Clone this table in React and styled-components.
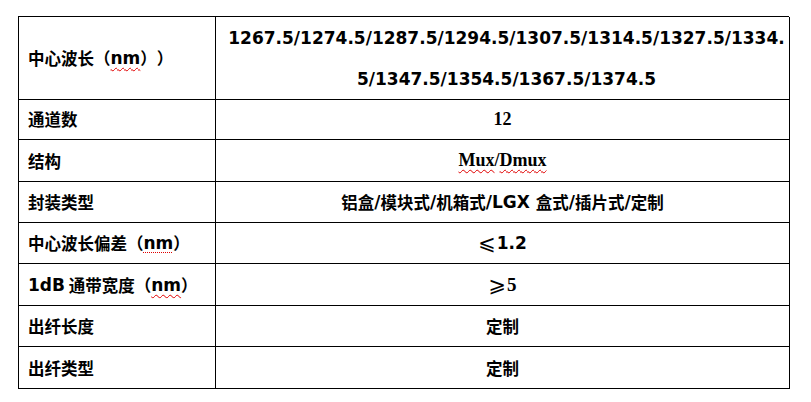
import React from "react";
import styled, { createGlobalStyle } from "styled-components";

const Global = createGlobalStyle`
  html, body { margin: 0; padding: 0; background: #fff; }
  body { font-family: "Noto Sans CJK SC", sans-serif; color: #000; }
`;

const Page = styled.div`
  padding: 16px 0 0 18px;
`;

const Table = styled.div`
  width: 771px;
  border-top: 1px solid #000;
  border-left: 1px solid #000;
  box-sizing: border-box;
`;

const Row = styled.div`
  display: grid;
  grid-template-columns: 197px 574px;
  height: ${(p) => p.$h}px;
`;

const Cell = styled.div`
  box-sizing: border-box;
  border-right: 1px solid #000;
  border-bottom: 1px solid #000;
  display: flex;
  align-items: center;
  font-family: "Noto Sans CJK SC", sans-serif;
  font-weight: 700;
  font-size: 16.5px;
  white-space: nowrap;
  text-spacing-trim: space-all;
`;

const Label = styled(Cell)`
  padding-left: 9px;
  justify-content: flex-start;
`;

const Value = styled(Cell)`
  justify-content: center;
  text-align: center;
  padding-left: ${(p) => p.$shift || 0}px;
`;

const Lines = styled.div`
  line-height: 40px;
`;

const Lat = styled.span`
  font-family: "DejaVu Sans", sans-serif;
  font-weight: 700;
  font-size: ${(p) => p.$size || 17}px;
`;

const Ser = styled.span`
  font-family: "Liberation Serif", serif;
  font-weight: 700;
  font-size: ${(p) => p.$size || 18}px;
`;

const Sym = styled.span`
  font-family: "DejaVu Sans", sans-serif;
  font-weight: 400;
  font-size: 21px;
  margin-right: 1px;
`;

const Spell = styled.span`
  text-decoration-line: underline;
  text-decoration-style: ${(p) => (p.$dotted ? "dotted" : "wavy")};
  text-decoration-color: #e00000;
  text-decoration-thickness: 1px;
  text-underline-offset: 3px;
`;

export default function App() {
  return (
    <>
      <Global />
      <Page>
        <Table>
          <Row $h={82}>
            <Label>
              中心波长（<Lat><Spell>nm</Spell></Lat>））
            </Label>
            <Value $shift={8}>
              <Lines>
                <Lat>1267.5/1274.5/1287.5/1294.5/1307.5/1314.5/1327.5/1334.</Lat>
                <br />
                <Lat>5/1347.5/1354.5/1367.5/1374.5</Lat>
              </Lines>
            </Value>
          </Row>
          <Row $h={41}>
            <Label>通道数</Label>
            <Value>
              <Ser>12</Ser>
            </Value>
          </Row>
          <Row $h={42}>
            <Label>结构</Label>
            <Value>
              <Ser>
                <Spell>Mux</Spell>/<Spell>Dmux</Spell>
              </Ser>
            </Value>
          </Row>
          <Row $h={41}>
            <Label>封装类型</Label>
            <Value>
              铝盒<Lat>/</Lat>模块式<Lat>/</Lat>机箱式<Lat>/LGX&nbsp;</Lat>盒式<Lat>/</Lat>插片式<Lat>/</Lat>定制
            </Value>
          </Row>
          <Row $h={41}>
            <Label>
              中心波长偏差（<Lat><Spell $dotted>nm</Spell></Lat>）
            </Label>
            <Value>
              <Sym>⩽</Sym>
              <Lat>1.2</Lat>
            </Value>
          </Row>
          <Row $h={42}>
            <Label>
              <Lat>1dB</Lat>&nbsp;通带宽度（<Lat><Spell>nm</Spell></Lat>）
            </Label>
            <Value>
              <Sym>⩾</Sym>
              <Ser $size={19}>5</Ser>
            </Value>
          </Row>
          <Row $h={41}>
            <Label>出纤长度</Label>
            <Value>定制</Value>
          </Row>
          <Row $h={42}>
            <Label>出纤类型</Label>
            <Value>定制</Value>
          </Row>
        </Table>
      </Page>
    </>
  );
}
